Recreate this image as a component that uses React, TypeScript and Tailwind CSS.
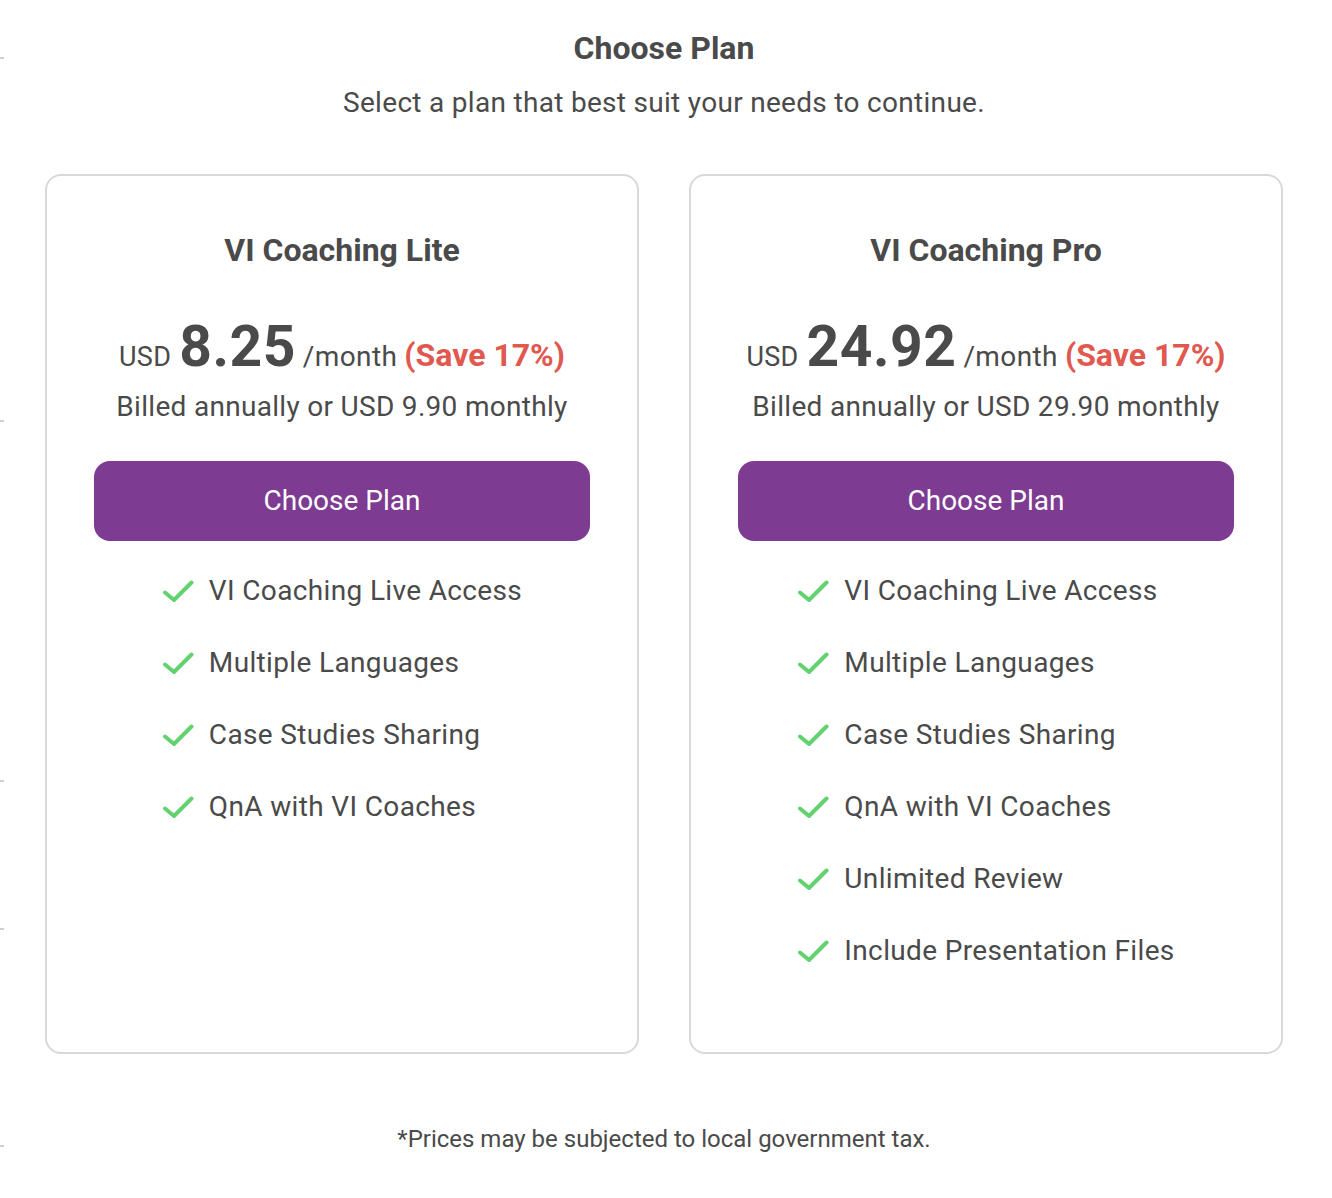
import React from 'react';

type Plan = {
  name: string;
  price: string;
  monthly: string;
  features: string[];
};

const plans: Plan[] = [
  {
    name: 'VI Coaching Lite',
    price: '8.25',
    monthly: '9.90',
    features: ['VI Coaching Live Access', 'Multiple Languages', 'Case Studies Sharing', 'QnA with VI Coaches'],
  },
  {
    name: 'VI Coaching Pro',
    price: '24.92',
    monthly: '29.90',
    features: [
      'VI Coaching Live Access',
      'Multiple Languages',
      'Case Studies Sharing',
      'QnA with VI Coaches',
      'Unlimited Review',
      'Include Presentation Files',
    ],
  },
];

function CheckIcon() {
  return (
    <svg width="32" height="24" viewBox="0 0 32 24" fill="none" className="shrink-0">
      <path d="M3 13.5 L12 21 L29.5 3.5" stroke="#62d26f" strokeWidth="4" strokeLinecap="round" strokeLinejoin="round" />
    </svg>
  );
}

function PlanCard({ plan }: { plan: Plan }) {
  return (
    <div className="flex flex-col border-2 border-[#d9d9d9] rounded-[16px] pt-[54px] pb-[83px]">
      <h2 className="text-center text-[32px] leading-[40px] font-bold">{plan.name}</h2>

      {/* price line */}
      <div className="mt-[45px] flex items-baseline justify-center h-[64px]">
        <span className="text-[27px] tracking-[0.3px]">USD</span>
        <span className="text-[57px] leading-[64px] font-bold ml-[8px] tracking-[0.5px]">{plan.price}</span>
        <span className="text-[28px] ml-[7px] tracking-[0.4px]">/month</span>
        <span className="text-[32px] font-bold text-[#e0584e] ml-[7px]">(Save 17%)</span>
      </div>
      <p className="mt-[12px] text-center text-[28px] leading-[32px] tracking-[0.3px]">
        Billed annually or USD {plan.monthly} monthly
      </p>

      <button
        type="button"
        className="mt-[38px] mx-[47px] h-[80px] rounded-[16px] bg-[#7d3b91] text-white text-[28px] cursor-pointer"
      >
        Choose Plan
      </button>

      <div className="mt-[32px] flex justify-center">
        <ul className="flex flex-col gap-[36px]">
          {plan.features.map((f) => (
            <li key={f} className="flex items-center gap-[15px] text-[28px] leading-[36px] tracking-[0.35px]">
              <CheckIcon />
              <span>{f}</span>
            </li>
          ))}
        </ul>
      </div>
    </div>
  );
}

export default function App() {
  return (
    <div
      className="relative min-h-[1198px] bg-white text-[#4a4a4a]"
      style={{ fontFamily: 'Roboto, "Noto Sans", sans-serif' }}
    >
      {/* left edge ticks */}
      {[57, 420, 780, 928, 1145].map((y) => (
        <div key={y} className="absolute left-0 w-[4px] h-[2px] bg-[#cfcfcf]" style={{ top: y }} />
      ))}

      <div className="ml-[45px] w-[1238px] flex flex-col items-center">
        <h1 className="mt-[28px] text-[32px] leading-[40px] font-bold">Choose Plan</h1>
        <p className="mt-[19px] text-[28px] leading-[32px] tracking-[0.3px]">
          Select a plan that best suit your needs to continue.
        </p>

        <div className="mt-[55px] w-full grid grid-cols-2 gap-[50px]">
          {plans.map((p) => (
            <PlanCard key={p.name} plan={p} />
          ))}
        </div>

        <p className="mt-[71px] text-[24px] leading-[28px]">*Prices may be subjected to local government tax.</p>
      </div>
    </div>
  );
}
